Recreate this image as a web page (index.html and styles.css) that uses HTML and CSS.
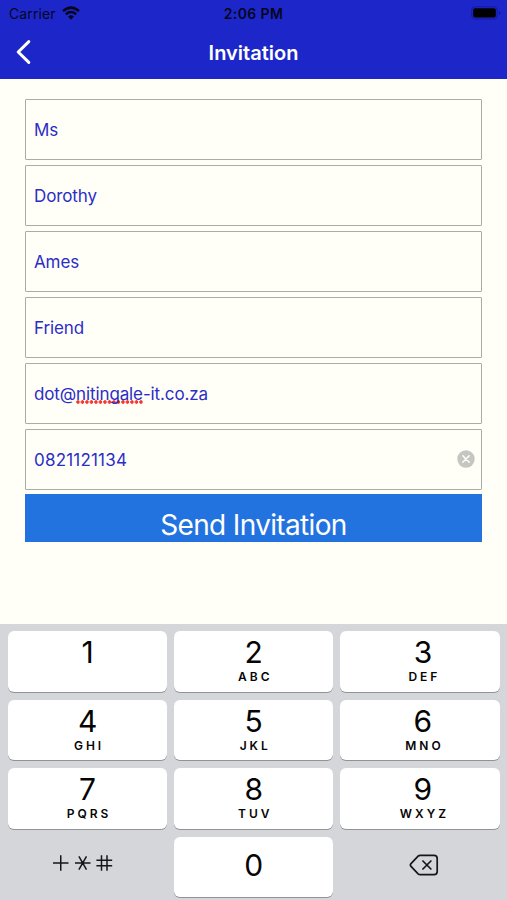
FILE: index.html
```
<!DOCTYPE html>
<html lang="en">
<head>
<meta charset="utf-8">
<title>Invitation</title>
<link rel="stylesheet" href="styles.css">
</head>
<body>
<header class="header">
  <div class="status">
    <div class="carrier"><span>Carrier</span>
      <svg class="wifi" width="18" height="14" viewBox="0 0 18 14" fill="none" stroke="#05061c" stroke-width="2.5"><path d="M1 5.1Q9-1.8 17 5.1"/><path d="M3.8 8.2Q9 3.9 14.2 8.2"/><path d="M6.1 10.6Q9 8 11.9 10.6L9 13.7z" fill="#05061c" stroke="none"/></svg>
    </div>
    <div class="time">2:06 PM</div>
    <svg class="battery" width="30" height="14" viewBox="0 0 30 14"><rect x=".8" y=".8" width="25.4" height="12.2" rx="3" fill="none" stroke="#1318a0" stroke-width="1"/><rect x="2.2" y="2.2" width="22.6" height="9.4" rx="1.8" fill="#000"/><path d="M28 5.2v3.5q1.4-.5 1.4-1.75T28 5.2z" fill="#10158f"/></svg>
  </div>
  <div class="nav">
    <svg class="back" width="18" height="26" viewBox="0 0 18 26" fill="none" stroke="#fff" stroke-width="3" stroke-linecap="round" stroke-linejoin="round"><path d="M13.8 2.6 3.2 13l10.6 10.4"/></svg>
    <h1 class="title">Invitation</h1>
  </div>
</header>
<main class="form">
  <div class="field">Ms</div>
  <div class="field">Dorothy</div>
  <div class="field">Ames</div>
  <div class="field">Friend</div>
  <div class="field email"><span>dot@<span class="misspelt">nitingale</span>-it.co.za</span></div>
  <div class="field phone"><span>0821121134</span>
    <svg class="clear" width="18" height="18" viewBox="0 0 18 18"><circle cx="9" cy="9" r="8.7" fill="#c5c6c1"/><path d="m5.8 5.8 6.4 6.4m0-6.4-6.4 6.4" stroke="#fffff8" stroke-width="1.5" stroke-linecap="round"/></svg>
  </div>
  <div class="send">Send Invitation</div>
</main>
<section class="keypad">
  <div class="key"><span class="digit">1</span></div>
  <div class="key"><span class="digit">2</span><span class="letters">ABC</span></div>
  <div class="key"><span class="digit">3</span><span class="letters">DEF</span></div>
  <div class="key"><span class="digit">4</span><span class="letters">GHI</span></div>
  <div class="key"><span class="digit">5</span><span class="letters">JKL</span></div>
  <div class="key"><span class="digit">6</span><span class="letters">MNO</span></div>
  <div class="key"><span class="digit">7</span><span class="letters">PQRS</span></div>
  <div class="key"><span class="digit">8</span><span class="letters">TUV</span></div>
  <div class="key"><span class="digit">9</span><span class="letters">WXYZ</span></div>
  <div class="key plain symbols"><svg width="62" height="18" viewBox="0 0 62 18" fill="none" stroke="#15161a" stroke-width="1.5"><path d="M1 9h15.5M8.75 1.3v15.5M23 9h15.5M26.9 2.3l7.6 13.4M34.5 2.3l-7.6 13.4M44.4 6.2h15.8M44.4 11.7h15.8M49.5 1.2v15.6M55 1.2v15.6"/></svg></div>
  <div class="key zero"><span class="digit">0</span></div>
  <div class="key plain delete"><svg width="30" height="22" viewBox="0 0 30 22" fill="none" stroke="#15161a" stroke-width="1.7" stroke-linejoin="round" stroke-linecap="round"><path d="M11.3 1.3H25q3.2 0 3.2 3.2v13q0 3.2-3.2 3.2H11.3q-1.3 0-2.2-.9L2 12.3q-1.2-1.3 0-2.6L9.1 2.2q.9-.9 2.2-.9z"/><path d="m13.9 7 8 8m0-8-8 8"/></svg></div>
</section>
</body>
</html>
```
FILE: styles.css
```
* { box-sizing: border-box; }
body {
  margin: 0;
  width: 507px;
  height: 900px;
  overflow: hidden;
  display: flex;
  flex-direction: column;
  background: #fffff8;
  font-family: Inter, "Liberation Sans", sans-serif;
}
.header { height: 79px; background: #1d27c9; flex: none; }
.status {
  height: 27px;
  display: grid;
  grid-template-columns: 1fr auto 1fr;
  align-items: center;
  padding: 0 7px 0 9px;
  color: #05061c;
}
.carrier { display: flex; align-items: center; gap: 6px; font-size: 14px; letter-spacing: 0.1px; }
.wifi { margin-top: -1px; }
.time { font-size: 14px; font-weight: 600; letter-spacing: 0.4px; margin-left: -2px; }
.battery { justify-self: end; margin: -1px -1px 0 0; }
.nav {
  height: 50px;
  display: grid;
  grid-template-columns: 1fr auto 1fr;
  align-items: center;
  padding: 0 15px;
}
.title { grid-column: 2; margin: 1px 0 0; font-size: 20px; font-weight: 600; color: #fff; }
.form { flex: none; height: 545px; padding: 20px 25px 0; display: flex; flex-direction: column; gap: 5px; }
.field {
  height: 61px;
  flex: none;
  border: 1px solid #abaca7;
  border-radius: 1px;
  padding: 0 7px 0 8px;
  display: flex;
  align-items: center;
  justify-content: space-between;
  font-size: 17px;
  letter-spacing: -0.12px;
  color: #2b2dc6;
}
.phone { letter-spacing: 0.2px; padding-right: 6px; }
.clear { margin-top: -1px; }
.misspelt {
  background: radial-gradient(circle at 2px 2px, #f5382f 1.5px, transparent 2px) 0 100% / 4.5px 4px repeat-x;
}
.send {
  height: 48px;
  margin-top: -1px;
  background: #2272e0;
  color: #fff;
  font-size: 28px;
  line-height: 63px;
  letter-spacing: -0.65px;
  text-align: center;
  overflow: hidden;
}
.keypad {
  flex: none;
  height: 276px;
  background: #d5d6da;
  padding: 7px 7.5px 0 8px;
  display: grid;
  grid-template-columns: repeat(3, 1fr);
  grid-auto-rows: 60.5px;
  gap: 8px 7px;
}
.key {
  background: #fff;
  border-radius: 6px;
  box-shadow: 0 1px 0 #929397;
  display: flex;
  flex-direction: column;
  align-items: center;
  color: #050505;
}
.key:nth-child(3n) { padding-left: 6px; }
.digit { font-size: 30px; line-height: 36px; margin-top: 3px; }
.letters { font-size: 12px; line-height: 14px; font-weight: 600; letter-spacing: 3px; margin-right: -3px; }
.zero .digit { margin-top: 10px; }
.plain { background: none; box-shadow: none; justify-content: center; padding-bottom: 5px; }
.symbols { padding-right: 9px; padding-bottom: 7px; }
.key.delete { padding-left: 8px; padding-bottom: 3px; }
```
